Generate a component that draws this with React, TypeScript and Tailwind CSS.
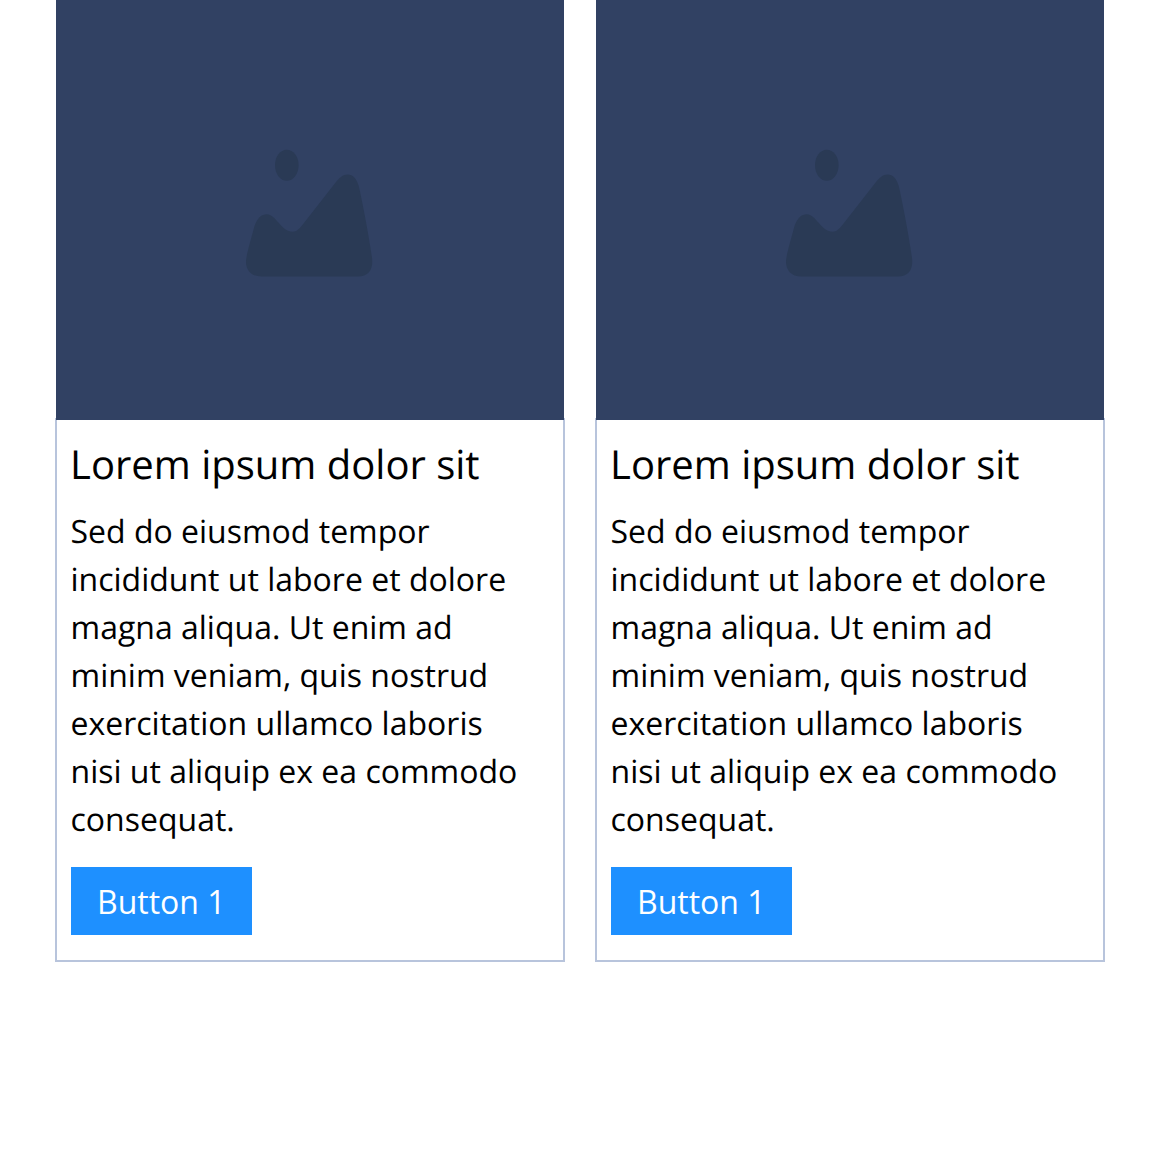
const lines = "Sed do eiusmod tempor incididunt ut labore et dolore magna aliqua. Ut enim ad minim veniam, quis nostrud exercitation ullamco laboris nisi ut aliquip ex ea commodo consequat.";

function Card() {
  return (
    <div className="flex flex-col">
      <div className="relative z-10 mx-px flex h-[420px] items-center justify-center bg-[#314163]">
        <svg width="140" height="140" viewBox="240 140 140 140" fill="#2a3a55">
          <ellipse cx="286.8" cy="165.3" rx="11.8" ry="15.5" />
          <path d="M261.7 276.5C251 276.5 246 270 246 261.7C246 256 250 243 254.5 226C257.5 218 261.5 214.3 266.7 214.3C272.5 214.3 277 221.5 283 227.5C286.5 230.5 289.5 231.7 292.7 231.7C296.5 231.7 299 229 302 225.5L335 183.3C339.5 177.5 343 174.5 347.5 174.5C353 174.5 357 179 359 187C364 210 369.5 240 372 258C373.5 270 368 276.5 358.3 276.5Z" />
        </svg>
      </div>
      <div className="-mt-0.5 border-2 border-[#b8c4dc] pb-[25px] pl-[13.5px] pr-[36px] pt-4 [text-rendering:geometricPrecision]">
        <h2 className="-ml-[0.5px] whitespace-nowrap text-[40px] leading-[56px] font-normal text-black">Lorem ipsum dolor sit</h2>
        <p className="mt-4 text-[32px] leading-[48px] text-black">{lines}</p>
        <button className="mt-[23px] block h-[68px] w-[181.5px] bg-[#1e90ff] pt-0.5 text-center text-[32px] leading-[66px] text-white">Button 1</button>
      </div>
    </div>
  );
}

export default function App() {
  return (
    <div className="min-h-[1174px] bg-white px-[55px] font-['Open_Sans',sans-serif]">
      <div className="grid grid-cols-2 gap-[30px]">
        <Card />
        <Card />
      </div>
    </div>
  );
}
